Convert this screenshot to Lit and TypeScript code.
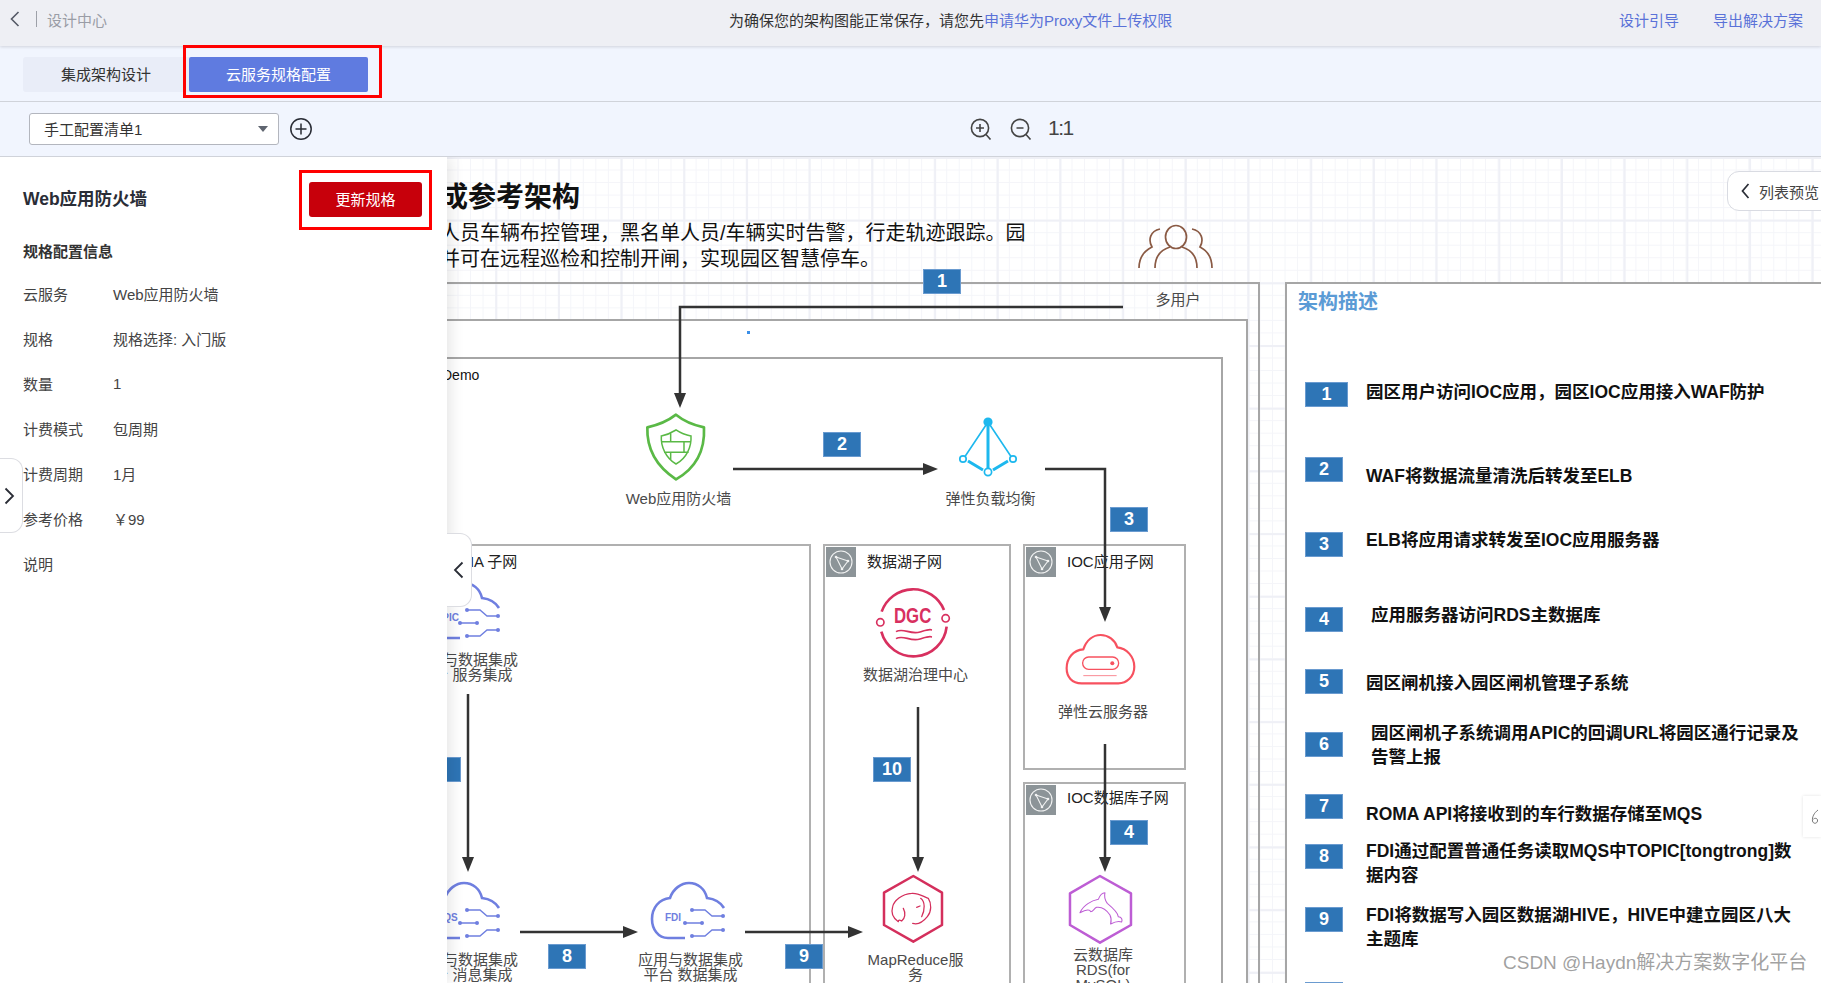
import { LitElement, html, css, svg } from "lit";
import { customElement } from "lit/decorators.js";

const OY = 157;

const frames = [
  { x: 300, y: 282, r: 1260, b: 1100, fill: false, w: 2.5 },
  { x: 300, y: 319, r: 1248, b: 1100, fill: true, w: 2.5 },
  { x: 300, y: 357, r: 1223, b: 1100, fill: true, w: 2.5 },
  { x: 1285, y: 282, r: 1900, b: 1100, fill: true, w: 2.5 },
];
const subnets = [
  { x: 400, y: 544, r: 811, b: 1100, icon: false, name: "ROMA 子网", tx: 439, ty: 562 },
  { x: 823, y: 544, r: 1011, b: 1100, icon: true, name: "数据湖子网", tx: 867, ty: 562 },
  { x: 1023, y: 544, r: 1186, b: 770, icon: true, name: "IOC应用子网", tx: 1067, ty: 562 },
  { x: 1023, y: 782, r: 1186, b: 1100, icon: true, name: "IOC数据库子网", tx: 1067, ty: 798 },
];
const badges = [
  { n: "1", x: 923, y: 269, w: 38 },
  { n: "2", x: 823, y: 432, w: 38 },
  { n: "3", x: 1110, y: 507, w: 38 },
  { n: "4", x: 1110, y: 820, w: 38 },
  { n: "7", x: 423, y: 757, w: 38 },
  { n: "8", x: 548, y: 944, w: 38 },
  { n: "9", x: 785, y: 944, w: 38 },
  { n: "10", x: 873, y: 757, w: 38 },
];
const labels = [
  { x: 678.5, y: 498.5, t: ["Web应用防火墙"] },
  { x: 990.5, y: 498.5, t: ["弹性负载均衡"] },
  { x: 465.5, y: 659.5, t: ["应用与数据集成", "平台 服务集成"] },
  { x: 465.5, y: 959.5, t: ["应用与数据集成", "平台 消息集成"] },
  { x: 690.5, y: 959.5, t: ["应用与数据集成", "平台 数据集成"] },
  { x: 915.5, y: 674.5, t: ["数据湖治理中心"] },
  { x: 915.5, y: 959.5, t: ["MapReduce服", "务"] },
  { x: 1103, y: 711, t: ["弹性云服务器"] },
  { x: 1103, y: 954.5, t: ["云数据库", "RDS(for", "MySQL)"] },
  { x: 1178, y: 299, t: ["多用户"] },
];
const steps = [
  { n: "1", by: 382, bw: 43, x: 1366, y: 392, t: ["园区用户访问IOC应用，园区IOC应用接入WAF防护"] },
  { n: "2", by: 457, bw: 38, x: 1366, y: 476, t: ["WAF将数据流量清洗后转发至ELB"] },
  { n: "3", by: 532, bw: 38, x: 1366, y: 540, t: ["ELB将应用请求转发至IOC应用服务器"] },
  { n: "4", by: 607, bw: 38, x: 1371, y: 615, t: ["应用服务器访问RDS主数据库"] },
  { n: "5", by: 669, bw: 38, x: 1366, y: 683, t: ["园区闸机接入园区闸机管理子系统"] },
  { n: "6", by: 732, bw: 38, x: 1371, y: 733, t: ["园区闸机子系统调用APIC的回调URL将园区通行记录及", "告警上报"] },
  { n: "7", by: 794, bw: 38, x: 1366, y: 814, t: ["ROMA API将接收到的车行数据存储至MQS"] },
  { n: "8", by: 844, bw: 38, x: 1366, y: 851, t: ["FDI通过配置普通任务读取MQS中TOPIC[tongtrong]数", "据内容"] },
  { n: "9", by: 907, bw: 38, x: 1366, y: 915, t: ["FDI将数据写入园区数据湖HIVE，HIVE中建立园区八大", "主题库"] },
  { n: "10", by: 982, bw: 38, x: 1366, y: 992, t: ["通过DGC对园区人员库车辆库中数据做数据治理"] },
];
const specs = [
  ["云服务", "Web应用防火墙"],
  ["规格", "规格选择: 入门版"],
  ["数量", "1"],
  ["计费模式", "包周期"],
  ["计费周期", "1月"],
  ["参考价格", "￥99"],
  ["说明", ""],
];
const arrows = [
  { d: "M1123 307H680V396", tip: [680, 408, "d"] },
  { d: "M733 469H926", tip: [938, 469, "r"] },
  { d: "M1045 469H1105V610", tip: [1105, 622, "d"] },
  { d: "M1105 744V860", tip: [1105, 872, "d"] },
  { d: "M468 694V860", tip: [468, 872, "d"] },
  { d: "M520 932H626", tip: [638, 932, "r"] },
  { d: "M745 932H851", tip: [863, 932, "r"] },
  { d: "M918 707V860", tip: [918, 872, "d"] },
];

const tipPts = (x: number, y: number, dir: string) =>
  dir === "d"
    ? `${x},${y} ${x - 6},${y - 15} ${x + 6},${y - 15}`
    : `${x},${y} ${x - 15},${y - 6} ${x - 15},${y + 6}`;

const cloud = (x: number, y: number, txt: string, tx: number) => svg`
  <g transform="translate(${x} ${y})" fill="none" stroke="#6f7fe0">
    <path stroke-width="2.6" d="M34 55H17C7 55 1 46 1 36C1 25 8 16 19 15C22 6 30 0 38 0C47 0 54 6 56 15C64 16 70 20 73 25"/>
    <path stroke-width="1.4" d="M41 27H54L61 33H72M34 40H51M41 53H54L61 47H72"/>
    <g fill="#6f7fe0" stroke="none">
      <circle cx="41" cy="27" r="2"/><circle cx="72" cy="33" r="2"/><circle cx="34" cy="40" r="2"/>
      <circle cx="51" cy="40" r="2"/><circle cx="41" cy="53" r="2"/><circle cx="72" cy="47" r="2"/>
      <text class="ctext" x="${tx}" y="37.5">${txt}</text>
    </g>
  </g>`;

@customElement("app-root")
export class AppRoot extends LitElement {
  static styles = css`
    :host {
      display: block;
      width: 100%;
      height: 100vh;
      overflow: hidden;
      position: relative;
      font-family: "Liberation Sans", "Noto Sans CJK SC", sans-serif;
      color: #333;
      background: #fff;
    }
    .page { display: flex; flex-direction: column; height: 100%; }
    .top {
      flex: 0 0 46px;
      box-sizing: border-box;
      padding-bottom: 8px;
      display: flex;
      align-items: center;
      background: #eeeff4;
      font-size: 15px;
      box-shadow: 0 1px 3px rgba(0, 0, 0, 0.14);
      position: relative;
      z-index: 2;
    }
    .crumb { flex: 0 0 729px; display: flex; align-items: center; padding-left: 10px; box-sizing: border-box; }
    .crumb svg { display: block; }
    .sep { width: 1px; height: 16px; background: #9da0a8; margin: 0 10px 0 16px; }
    .crumb span { color: #9a9da6; }
    .notice { color: #333; }
    .link { color: #5a72d8; }
    .links { margin-left: auto; display: flex; gap: 34px; padding-right: 18px; }
    .tabs {
      flex: 0 0 56px;
      box-sizing: border-box;
      background: #f1f5fe;
      border-bottom: 1px solid #d0d3da;
      padding: 11px 0 0 23px;
      display: flex;
      align-items: flex-start;
      position: relative;
      font-size: 15px;
    }
    .tab {
      height: 35px;
      box-sizing: border-box;
      padding-bottom: 3px;
      display: flex;
      align-items: center;
      justify-content: center;
      background: #e9edf8;
      border-radius: 3px 0 0 3px;
      width: 166px;
    }
    .tab.on { width: 179px; background: #5f7be0; color: #fff; border-radius: 2px; }
    .mark { position: absolute; border: 3px solid #f00; box-sizing: border-box; pointer-events: none; z-index: 8; }
    .mark.m1 { left: 183px; top: -1px; width: 199px; height: 53px; }
    .mark.m2 { left: 299px; top: 13px; width: 133px; height: 60px; }
    .tools {
      flex: 0 0 55px;
      box-sizing: border-box;
      background: #f1f5fe;
      border-bottom: 1px solid #d0d3da;
      display: flex;
      align-items: center;
      padding-bottom: 1px;
    }
    .left { flex: 0 0 970px; box-sizing: border-box; padding-left: 29px; display: flex; align-items: center; gap: 11px; }
    .select {
      width: 250px;
      height: 32px;
      box-sizing: border-box;
      background: #fff;
      border: 1px solid #b3b6be;
      border-radius: 3px;
      padding: 0 10px 0 14px;
      display: flex;
      align-items: center;
      justify-content: space-between;
      font-size: 15px;
    }
    .caret { width: 0; height: 0; border: 5px solid transparent; border-top: 6px solid #5f6570; border-bottom: 0; }
    .zoom { display: flex; align-items: center; gap: 18px; color: #444; }
    .zoom svg { display: block; }
    .ratio { font-size: 21px; width: 20px; margin-left: -2px; padding-bottom: 2px; letter-spacing: -1.5px; white-space: nowrap; }
    .work { flex: 1; position: relative; overflow: hidden; min-height: 0; }
    .grid {
      position: absolute;
      inset: 0;
      background-color: #fff;
      background-image:
        linear-gradient(#eff0f6 2px, transparent 2px),
        linear-gradient(90deg, #eff0f6 2px, transparent 2px),
        linear-gradient(#f4f5f9 1px, transparent 1px),
        linear-gradient(90deg, #f4f5f9 1px, transparent 1px);
      background-size: 62.7px 62.7px, 62.7px 62.7px, 12.54px 12.54px, 12.54px 12.54px;
      background-position: 0 0, 56.5px 0, 0 0, 56.5px 0;
    }
    .frame { position: absolute; box-sizing: border-box; border-style: solid; border-color: #a6a6a6; }
    .frame.fill { background: #fff; }
    .subnet { position: absolute; box-sizing: border-box; border: 2px solid #b0b0b0; background: #fff; }
    .subnet svg { display: block; margin: 1px; }
    .overlay { position: absolute; left: 0; top: 0; }
    .sname, .label, .free { position: absolute; white-space: nowrap; font-size: 15px; line-height: 15px; }
    .sname { color: #222; transform: translateY(-50%); line-height: 20px; }
    .label { color: #4a4a4a; transform: translateX(-50%); text-align: center; }
    .label div { height: 15px; }
    .badge {
      position: absolute;
      box-sizing: border-box;
      height: 25px;
      background: #2e75b6;
      border: 1px solid #6a9bd0;
      color: #fff;
      font-weight: 700;
      font-size: 18px;
      display: flex;
      align-items: center;
      justify-content: center;
    }
    .title { left: 440px; top: 21px; font-size: 28px; line-height: 40px; font-weight: 700; color: #111; }
    .desc { left: 440px; top: 63px; font-size: 20px; line-height: 26px; color: #111; white-space: nowrap; }
    .demo { left: 442px; top: 210px; font-size: 14px; line-height: 16px; color: #111; }
    .dhead { left: 1298px; top: 130px; font-size: 20px; line-height: 30px; font-weight: 700; color: #5b9bd5; }
    .step { position: absolute; font-size: 17.5px; font-weight: 700; line-height: 24.5px; color: #111; white-space: nowrap; }
    .dot { position: absolute; left: 747px; top: 174px; width: 3px; height: 3px; background: #3b8fe8; }
    .ctext { font: 700 10px "Liberation Sans", sans-serif; }
    .dgc { font: 700 66px "Liberation Sans", sans-serif; }
    .preview {
      position: absolute;
      left: 1727px;
      top: 14px;
      width: 110px;
      height: 40px;
      box-sizing: border-box;
      background: #fff;
      border: 1px solid #d9dbe2;
      border-radius: 12px;
      display: flex;
      align-items: center;
      gap: 9px;
      padding-left: 13px;
      font-size: 15px;
      color: #444;
      white-space: nowrap;
    }
    .panel {
      position: absolute;
      left: 0;
      top: 0;
      bottom: 0;
      width: 447px;
      box-sizing: border-box;
      background: #fff;
      box-shadow: 3px 0 14px rgba(0, 0, 0, 0.11);
      padding: 25px 25px 0 23px;
      z-index: 5;
      font-size: 15px;
    }
    .phead { display: flex; align-items: center; justify-content: space-between; }
    .phead h2 { margin: 0; padding-bottom: 4px; font-size: 17.5px; font-weight: 700; color: #2a2d36; }
    .btn {
      width: 113px;
      height: 35px;
      box-sizing: border-box;
      padding-bottom: 3px;
      background: #c7000b;
      color: #fff;
      border-radius: 3px;
      display: flex;
      align-items: center;
      justify-content: center;
    }
    .sub { margin: 25px 0 8.5px; font-size: 15px; line-height: 20px; font-weight: 700; color: #333; }
    .row { display: flex; height: 45px; align-items: center; color: #444; }
    .row b { font-weight: 400; flex: 0 0 90px; }
    .handle {
      position: absolute;
      box-sizing: border-box;
      background: #fff;
      border: 1px solid #dcdde2;
      border-left: 0;
      border-radius: 0 12px 12px 0;
      display: flex;
      align-items: center;
      z-index: 6;
    }
    .h1 { left: 0; top: 301px; width: 23px; height: 75px; padding-left: 4px; }
    .h2 { left: 447px; top: 376px; width: 25px; height: 74px; padding-left: 6px; }
    .watermark {
      position: absolute;
      left: 1503px;
      top: 794px;
      font-size: 19px;
      line-height: 24px;
      color: rgba(130, 130, 130, 0.75);
      white-space: nowrap;
      z-index: 7;
    }
    .float {
      position: absolute;
      left: 1803px;
      top: 639px;
      width: 18px;
      height: 41px;
      background: #fff;
      box-shadow: 0 0 3px rgba(0, 0, 0, 0.12);
      display: flex;
      align-items: center;
      padding-left: 8px;
      box-sizing: border-box;
      z-index: 7;
    }
  `;

  private pos(x: number, y: number, extra = "") {
    return `left:${x}px;top:${y - OY}px;${extra}`;
  }

  render() {
    return html`
      <div class="page">
        <div class="top">
          <div class="crumb">
            <svg width="10" height="16" viewBox="0 0 10 16"><path d="M8.5 1L1.5 8l7 7" fill="none" stroke="#555a66" stroke-width="1.6"/></svg>
            <div class="sep"></div>
            <span>设计中心</span>
          </div>
          <div class="notice">为确保您的架构图能正常保存，请您先<span class="link">申请华为Proxy文件上传权限</span></div>
          <div class="links"><span class="link">设计引导</span><span class="link">导出解决方案</span></div>
        </div>
        <div class="tabs">
          <div class="tab">集成架构设计</div>
          <div class="tab on">云服务规格配置</div>
          <div class="mark m1"></div>
        </div>
        <div class="tools">
          <div class="left">
            <div class="select"><span>手工配置清单1</span><i class="caret"></i></div>
            <svg width="22" height="22" viewBox="0 0 22 22" fill="none" stroke="#2a2d36" stroke-width="1.5"><circle cx="11" cy="11" r="10.2"/><path d="M11 5.5v11M5.5 11h11"/></svg>
          </div>
          <div class="zoom">
            <svg width="22" height="22" viewBox="0 0 22 22" fill="none" stroke="#444" stroke-width="1.6"><circle cx="10" cy="10" r="8.6"/><path d="M16 16.5L20.5 21.5M10 6v8M6 10h8"/></svg>
            <svg width="22" height="22" viewBox="0 0 22 22" fill="none" stroke="#444" stroke-width="1.6"><circle cx="10" cy="10" r="8.6"/><path d="M16 16.5L20.5 21.5M6.5 10h7"/></svg>
            <span class="ratio">1:1</span>
          </div>
        </div>
        <div class="work">
          <div class="grid"></div>
          ${frames.map(
            (f) => html`<div class="frame ${f.fill ? "fill" : ""}" style="${this.pos(f.x, f.y, `width:${f.r - f.x}px;height:${f.b - f.y}px;border-width:${f.w}px;`)}"></div>`
          )}
          ${subnets.map(
            (s) => html`<div class="subnet" style="${this.pos(s.x, s.y, `width:${s.r - s.x}px;height:${s.b - s.y}px;`)}">
              ${s.icon
                ? html`<svg width="30" height="30" viewBox="0 0 30 30"><rect width="30" height="30" fill="#8c9498"/><g fill="none" stroke="#f2f3f3" stroke-width="1.1"><circle cx="15" cy="15" r="11"/><path d="M10 10L22 14L16 22Z"/></g><g fill="#f2f3f3"><circle cx="10" cy="10" r="1.3"/><circle cx="22" cy="14" r="1.3"/><circle cx="16" cy="22" r="1.3"/></g></svg>`
                : ""}
            </div>`
          )}
          ${subnets.map((s) => html`<div class="sname" style="${this.pos(s.tx, s.ty)}">${s.name}</div>`)}
          <div class="free title">成参考架构</div>
          <div class="free desc">人员车辆布控管理，黑名单人员/车辆实时告警，行走轨迹跟踪。园<br />并可在远程巡检和控制开闸，实现园区智慧停车。</div>
          <div class="free demo">Demo</div>
          <div class="free dhead">架构描述</div>
          <div class="dot"></div>

          <svg class="overlay" width="1821" height="826" viewBox="0 157 1821 826">
            ${arrows.map(
              (a) => svg`<path d=${a.d} fill="none" stroke="#333" stroke-width="2.5"/>
                <polygon points=${tipPts(a.tip[0] as number, a.tip[1] as number, a.tip[2] as string)} fill="#333"/>`
            )}
            <g fill="none" stroke="#8a5a44" stroke-width="1.7">
              <ellipse cx="1176" cy="237" rx="10.5" ry="11.5"/>
              <path d="M1155 268C1155 256 1160 250 1170 247M1197 268C1197 256 1192 250 1182 247"/>
              <path d="M1160 229C1150 231 1148 240 1152 247C1144 251 1139 258 1139 268"/>
              <path d="M1192 229C1202 231 1204 240 1200 247C1208 251 1212 258 1212 268"/>
            </g>
            <g transform="translate(640 410) scale(.3333)" fill="none" stroke="#5ab946">
              <path stroke-width="8" stroke-linejoin="round" d="M108 14C130 32 160 45 192 52C195 115 175 170 108 208C50 170 20 115 22 52C55 45 85 32 108 14Z"/>
              <path stroke-width="4.5" d="M108 60C120 68 135 75 153 78C155 110 140 145 108 162C78 145 62 110 64 78C80 75 95 68 108 60ZM66 95H153M72 127H146M92 68V95M132 95V127M92 127V150"/>
            </g>
            <g fill="none" stroke="#1db8ee" stroke-width="1.6">
              <path d="M988 422L964 458M988 422L1012 458"/>
              <path stroke-width="3" d="M988 422V468M968 461L983 470M993 470L1008 461"/>
              <circle cx="988" cy="422" r="4.6" fill="#1db8ee" stroke="none"/>
              <circle cx="963" cy="459" r="3.2" fill="#fff" stroke-width="1.7"/>
              <circle cx="1013" cy="459" r="3.2" fill="#fff" stroke-width="1.7"/>
              <circle cx="988" cy="472" r="3.6" fill="#fff" stroke-width="1.7"/>
            </g>
            ${cloud(426, 583, "APIC", 9)}
            ${cloud(426, 883, "MQS", 9)}
            ${cloud(651, 883, "FDI", 14)}
            <g transform="translate(820 530) scale(.3333)" fill="none" stroke="#d8305f" stroke-width="8">
              <path d="M185 245A100 100 0 0 1 372 240M184 305A100 100 0 0 0 380 290"/>
              <circle cx="181" cy="277" r="11" stroke-width="5" fill="#fff"/>
              <circle cx="377" cy="265" r="11" stroke-width="5" fill="#fff"/>
              <text class="dgc" x="222" y="279" textLength="112" lengthAdjust="spacingAndGlyphs" fill="#d8305f" stroke="none">DGC</text>
              <path stroke-width="5" d="M228 305C250 292 270 315 300 306S325 298 336 300M228 326C250 313 270 336 300 327S325 319 336 321"/>
            </g>
            <g transform="translate(820 530) scale(.3333)" fill="none" stroke="#f7515f">
              <path stroke-width="6.5" d="M785 460C755 460 740 440 740 415C740 385 760 360 790 358C800 330 820 315 842 315C865 315 885 330 892 352C920 355 943 380 943 410C943 440 920 460 895 460Z"/>
              <rect x="788" y="381" width="108" height="37" rx="18" stroke-width="4"/>
              <circle cx="877" cy="400" r="6" fill="#f7515f" stroke="none"/>
              <path stroke-width="3" stroke="#f98b94" d="M790 437H890"/>
            </g>
            <g transform="translate(870 870) scale(.3333)" fill="none" stroke="#d42f5c" stroke-linejoin="round" stroke-linecap="round">
              <path stroke-width="7.5" d="M130 18L216 68V165L130 215L42 165V68Z"/>
              <path stroke-width="3.8" d="M85 155C70 145 62 130 68 110C72 92 95 72 125 70C145 68 160 80 175 85C185 100 185 125 172 140C160 155 145 165 128 160M100 115C108 130 105 145 95 153C90 150 85 148 85 155M140 112L150 108M152 85C166 95 165 120 155 140"/>
            </g>
            <g transform="translate(870 870) scale(.3333)" fill="none" stroke="#bd5dd4" stroke-linejoin="round" stroke-linecap="round">
              <path stroke-width="7.5" d="M690 18L783 70V165L690 218L600 165V70Z"/>
              <path stroke-width="3.2" d="M630 128C640 105 665 92 685 88C690 75 698 68 705 68C702 80 706 92 712 100C730 115 745 130 745 140C755 140 758 150 755 156C745 152 735 155 722 162C725 150 725 145 720 135C710 120 695 110 680 112C672 115 670 125 662 125C660 118 650 118 630 128Z"/>
            </g>
          </svg>

          ${labels.map(
            (l) => html`<div class="label" style="${this.pos(l.x, l.y - 7.5)}">${l.t.map((t) => html`<div>${t}</div>`)}</div>`
          )}
          ${badges.map(
            (b) => html`<div class="badge" style="${this.pos(b.x, b.y, `width:${b.w}px;`)}">${b.n}</div>`
          )}
          ${steps.map(
            (s) => html`<div class="badge" style="${this.pos(1305, s.by, `width:${s.bw}px;`)}">${s.n}</div>
              <div class="step" style="${this.pos(s.x, s.y - 12.25)}">${s.t.map((t) => html`<div>${t}</div>`)}</div>`
          )}
          <div class="preview">
            <svg width="9" height="16" viewBox="0 0 9 16"><path d="M7.5 1L1.5 8l6 7" fill="none" stroke="#2a2d36" stroke-width="1.7"/></svg>
            <span>列表预览</span>
          </div>
          <div class="float">
            <svg width="10" height="18" viewBox="0 0 10 18"><path d="M7 2C3 5 1 9 1.5 13C2 16 6 16 6.5 13C7 10 3.5 9.5 2 11.5" fill="none" stroke="#777" stroke-width="1"/></svg>
          </div>

          <div class="panel">
            <div class="phead"><h2>Web应用防火墙</h2><div class="btn">更新规格</div></div>
            <div class="sub">规格配置信息</div>
            ${specs.map(([k, v]) => html`<div class="row"><b>${k}</b><span>${v}</span></div>`)}
            <div class="mark m2"></div>
          </div>
          <div class="handle h1"><svg width="11" height="18" viewBox="0 0 11 18"><path d="M1.5 1.5L9 9l-7.5 7.5" fill="none" stroke="#2a2d36" stroke-width="1.8"/></svg></div>
          <div class="handle h2"><svg width="11" height="18" viewBox="0 0 11 18"><path d="M9.5 1.5L2 9l7.5 7.5" fill="none" stroke="#2a2d36" stroke-width="1.8"/></svg></div>
          <div class="watermark">CSDN @Haydn解决方案数字化平台</div>
        </div>
      </div>
    `;
  }
}
